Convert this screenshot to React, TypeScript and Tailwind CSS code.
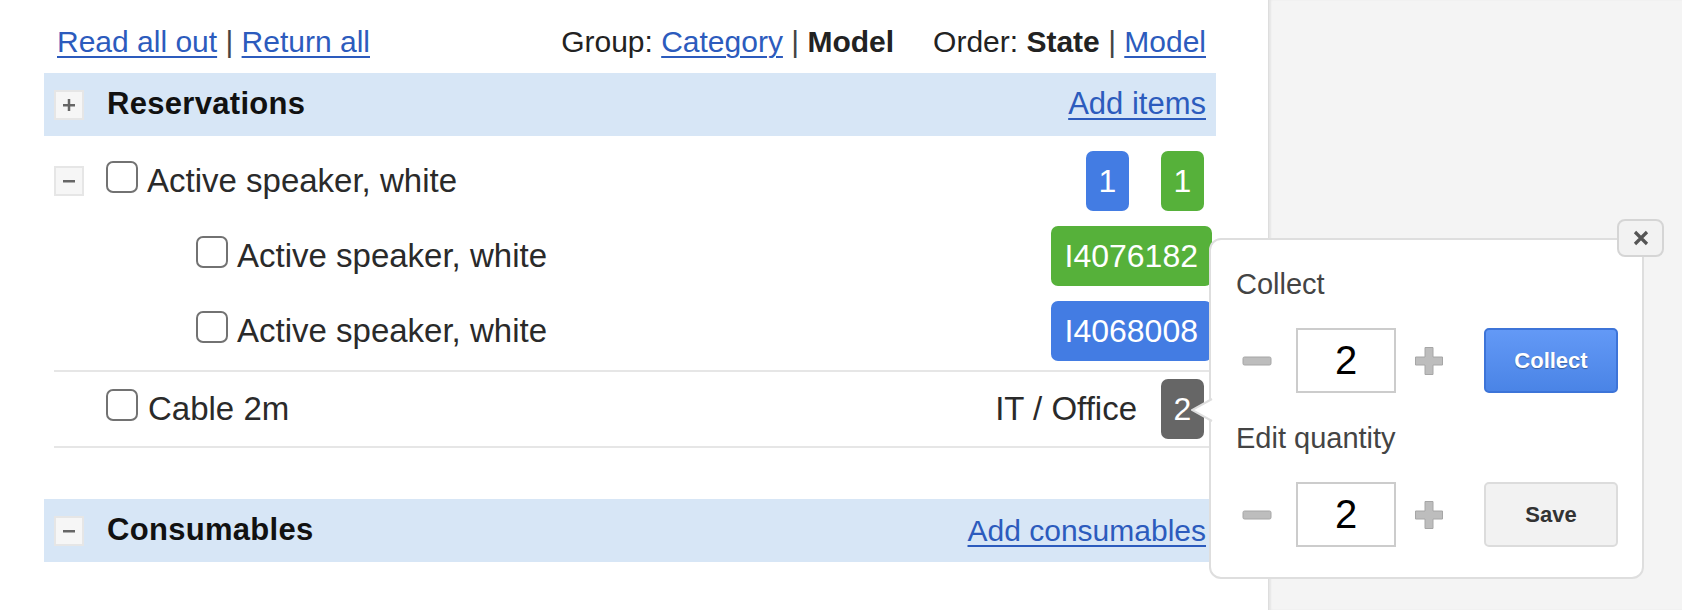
import React from "react";

type Badge = { label: string; color: string };

const badgeColors: Record<string, string> = {
  blue: "bg-[#437ce3]",
  green: "bg-[#56b13a]",
  gray: "bg-[#666666]",
};

function Toggle({ open }: { open: boolean }) {
  return (
    <span className="flex h-[30px] w-[30px] shrink-0 items-center justify-center border-2 border-[#e6e6e6] bg-[#f6f6f6]">
      <svg width="14" height="14" viewBox="0 0 14 14">
        <rect x="1" y="6" width="12" height="2.5" fill="#666" />
        {!open && <rect x="5.75" y="1" width="2.5" height="12" fill="#666" />}
      </svg>
    </span>
  );
}

function Checkbox() {
  return <span className="mb-[8px] block h-[32px] w-[32px] shrink-0 rounded-[7px] border-2 border-[#727272] bg-white" />;
}

function Pill({ label, color, className = "" }: Badge & { className?: string }) {
  return (
    <span
      className={`flex h-[60px] items-center justify-center rounded-[7px] text-[32px] text-white ${badgeColors[color]} ${className}`}
    >
      {label}
    </span>
  );
}

function SectionBar({ title, open, link, linkSize }: { title: string; open: boolean; link: string; linkSize: string }) {
  return (
    <div className="flex h-[63px] items-center bg-[#d7e6f6] pl-[10px] pr-[10px]">
      <Toggle open={open} />
      <span className="ml-[23px] text-[31px] font-bold tracking-[0.3px] text-[#111]">{title}</span>
      <a className={`ml-auto ${linkSize} text-[#2c5bbd] underline decoration-2 underline-offset-[4px]`} href="#">
        {link}
      </a>
    </div>
  );
}

function MinusIcon() {
  return (
    <svg width="30" height="30" viewBox="0 0 30 30" className="shrink-0">
      <rect x="1" y="11" width="28" height="8" rx="1.5" fill="#bdbdbd" stroke="#a6a6a6" strokeWidth="1" />
    </svg>
  );
}

function PlusIcon() {
  return (
    <svg width="30" height="30" viewBox="0 0 30 30" className="shrink-0">
      <path
        d="M11 1.5h8v9.5h9.5v8H19v9.5h-8V19H1.5v-8H11z"
        fill="#bdbdbd"
        stroke="#a6a6a6"
        strokeWidth="1"
      />
    </svg>
  );
}

function QtyRow({ button, primary }: { button: string; primary: boolean }) {
  return (
    <div className="flex h-[65px] items-center pl-[6px]">
      <MinusIcon />
      <input
        readOnly
        value="2"
        className="ml-[24px] h-[65px] w-[100px] border-2 border-[#cccccc] bg-white text-center text-[40px] text-black outline-none"
      />
      <span className="ml-[18px]">
        <PlusIcon />
      </span>
      <button
        className={
          primary
            ? "ml-[40px] h-[65px] w-[134px] rounded-[5px] border-2 border-[#3d74d8] bg-gradient-to-b from-[#6399f6] to-[#4a84e6] text-[22px] font-bold text-white [text-shadow:0_1px_1px_rgba(0,0,0,0.35)]"
            : "ml-[40px] h-[65px] w-[134px] rounded-[5px] border-2 border-[#dcdcdc] bg-[#f2f2f2] text-[22px] font-bold text-[#333]"
        }
      >
        {button}
      </button>
    </div>
  );
}

export default function App() {
  return (
    <div className="relative flex h-[610px] w-full overflow-hidden bg-white font-['Liberation_Sans',Arial,sans-serif] text-[#2a2a2a]">
      <div className="w-[1268px] shrink-0 bg-white pl-[44px] pr-[52px]">
        {/* toolbar */}
        <div className="flex h-[73px] justify-between pl-[13px] pr-[10px] pt-[24px] text-[30px] leading-[36px] text-[#222]">
          <div>
            <a href="#" className="text-[#2c5bbd] underline decoration-2 underline-offset-[4px]">
              Read all out
            </a>{" "}
            <span className="text-[#444]">|</span>{" "}
            <a href="#" className="text-[#2c5bbd] underline decoration-2 underline-offset-[4px]">
              Return all
            </a>
          </div>
          <div className="flex gap-[39px]">
            <span>
              Group:{" "}
              <a href="#" className="text-[#2c5bbd] underline decoration-2 underline-offset-[4px]">
                Category
              </a>{" "}
              <span className="text-[#444]">|</span> <b>Model</b>
            </span>
            <span>
              Order: <b>State</b> <span className="text-[#444]">|</span>{" "}
              <a href="#" className="text-[#2c5bbd] underline decoration-2 underline-offset-[4px]">
                Model
              </a>
            </span>
          </div>
        </div>

        <SectionBar title="Reservations" open={false} link="Add items" linkSize="text-[31px]" />

        {/* model group */}
        <div className="ml-[10px] flex flex-col gap-[15px] border-b-2 border-[#e6e6e6] pb-[9px] pt-[15px] text-[33px]">
          <div className="flex h-[60px] items-center">
            <Toggle open />
            <span className="ml-[22px]">
              <Checkbox />
            </span>
            <span className="ml-[9px]">Active speaker, white</span>
            <Pill label="1" color="blue" className="ml-auto w-[43px]" />
            <Pill label="1" color="green" className="ml-[32px] mr-[12px] w-[43px]" />
          </div>
          <div className="flex h-[60px] items-center pl-[142px]">
            <Checkbox />
            <span className="ml-[9px]">Active speaker, white</span>
            <Pill label="I4076182" color="green" className="ml-auto mr-[4px] px-[14px]" />
          </div>
          <div className="flex h-[60px] items-center pl-[142px]">
            <Checkbox />
            <span className="ml-[9px]">Active speaker, white</span>
            <Pill label="I4068008" color="blue" className="ml-auto mr-[4px] px-[14px]" />
          </div>
        </div>

        <div className="ml-[10px] border-b-2 border-[#e6e6e6] pb-[7px] pt-[7px] text-[33px]">
          <div className="flex h-[60px] items-center pl-[52px]">
            <Checkbox />
            <span className="ml-[10px]">Cable 2m</span>
            <span className="ml-auto">IT / Office</span>
            <Pill label="2" color="gray" className="ml-[24px] mr-[12px] w-[43px]" />
          </div>
        </div>

        <div className="mt-[51px]">
          <SectionBar title="Consumables" open link="Add consumables" linkSize="text-[30px]" />
        </div>
      </div>

      <div className="flex-1 border-l border-[#dddddd] bg-[#f4f4f4] shadow-[inset_2px_0_2px_rgba(0,0,0,0.06)]" />

      {/* popover */}
      <div className="absolute left-[1209px] top-[238px] h-[341px] w-[435px] rounded-[12px] border-2 border-[#dedede] bg-white pl-[25px] pt-[27px]">
        <svg width="22" height="24" viewBox="0 0 22 24" className="absolute left-[-20px] top-[158px]">
          <polygon points="1,12 21,1 22,1 22,23 21,23" fill="#fff" />
          <polyline points="21,1 1,12 21,23" fill="none" stroke="#dedede" strokeWidth="2" />
        </svg>
        <button className="absolute left-[406px] top-[-21px] flex h-[38px] w-[47px] items-center justify-center rounded-[8px] border-2 border-[#d5d5d5] bg-[#f2f2f2]">
          <svg width="16" height="16" viewBox="0 0 16 16">
            <path d="M2 2L14 14M14 2L2 14" stroke="#555" strokeWidth="3.2" />
          </svg>
        </button>

        <div className="text-[29px] leading-[34px] text-[#444]">Collect</div>
        <div className="mt-[27px]">
          <QtyRow button="Collect" primary />
        </div>
        <div className="mt-[28px] text-[29px] leading-[34px] text-[#444]">Edit quantity</div>
        <div className="mt-[27px]">
          <QtyRow button="Save" primary={false} />
        </div>
      </div>
    </div>
  );
}
